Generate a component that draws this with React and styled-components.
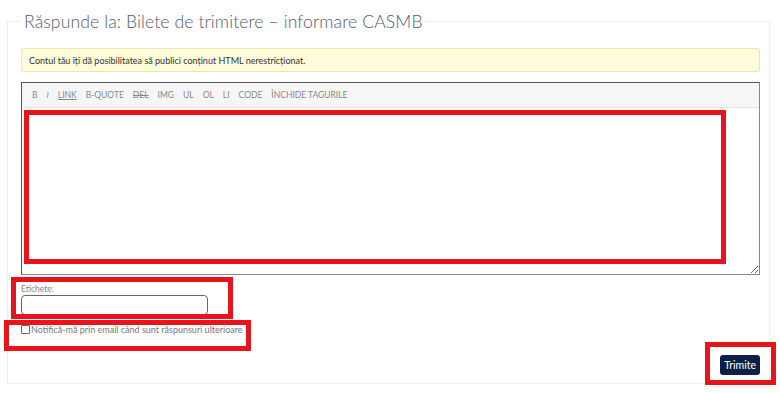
import React from 'react'
import styled, { createGlobalStyle } from 'styled-components'

const Global = createGlobalStyle`
  html, body { margin: 0; padding: 0; background: #fff; }
  body { font-family: Lato, "Open Sans", sans-serif; color: #555; }
  * { box-sizing: border-box; }
`

const Page = styled.div`
  position: relative;
  width: 780px;
  height: 393px;
  padding: 11px 10px 0 7px;
`

const Fieldset = styled.fieldset`
  margin: 0;
  height: 373px;
  border: 1px solid #eeeff1;
  padding: 16px 9px 0 13px;
`

const Legend = styled.legend`
  font-family: Lato, sans-serif;
  font-weight: 300;
  font-size: 17.6px;
  color: #4f5d6b;
  padding: 0 3px;
  margin-left: 0;
  letter-spacing: 0.1px;
`

const Notice = styled.div`
  height: 24px;
  background: #fffcdc;
  border: 1px solid #efe7a4;
  border-radius: 2px;
  font-size: 9px;
  color: #333;
  display: flex;
  align-items: center;
  padding-left: 7px;
`

const Editor = styled.div`
  margin-top: 10px;
  height: 193px;
  border: 1px solid #777;
  border-color: #555 #888 #888 #555;
  display: flex;
  flex-direction: column;
`

const Toolbar = styled.div`
  height: 25px;
  background: #f6f6f6;
  border-bottom: 1px solid #e2e2e2;
  display: flex;
  align-items: center;
  gap: 9px;
  padding-left: 10px;
  font-size: 8.5px;
  color: #888;
`

const Tool = styled.span`
  text-decoration: ${p => (p.$u ? 'underline' : p.$s ? 'line-through' : 'none')};
  font-style: ${p => (p.$i ? 'italic' : 'normal')};
`

const Area = styled.textarea`
  flex: 1;
  border: none;
  outline: none;
  resize: vertical;
  background: #fff;
`

const Label = styled.div`
  margin-top: 9px;
  font-size: 8.5px;
  color: #888;
  height: 10px;
  line-height: 10px;
`

const Input = styled.input`
  display: block;
  margin-top: 1px;
  width: 187px;
  height: 20px;
  border: 1px solid #666;
  border-radius: 4px;
  outline: none;
`

const CheckRow = styled.label`
  margin-top: 8px;
  display: flex;
  align-items: center;
  font-size: 9px;
  color: #777;
  height: 12px;
`

const Box = styled.span`
  width: 9px;
  height: 9px;
  border: 1px solid #666;
  border-radius: 1px;
  margin-right: 1px;
`

const Actions = styled.div`
  display: flex;
  justify-content: flex-end;
  margin-top: 20px;
`

const Submit = styled.button`
  height: 20px;
  padding: 0 4px;
  background: #0c1f47;
  color: #fff;
  border: none;
  border-radius: 3px;
  font-family: Lato, sans-serif;
  font-size: 10.5px;
`

const Mark = styled.div`
  position: absolute;
  border: 5px solid #e8141c;
  pointer-events: none;
`

const tools = [
  ['B'], ['I', { $i: true }], ['LINK', { $u: true }], ['B-QUOTE'], ['DEL', { $s: true }],
  ['IMG'], ['UL'], ['OL'], ['LI'], ['CODE'], ['ÎNCHIDE TAGURILE'],
]

export default function App() {
  return (
    <Page>
      <Global />
      <Fieldset>
        <Legend>Răspunde la: Bilete de trimitere – informare CASMB</Legend>
        <Notice>Contul tău îți dă posibilitatea să publici conținut HTML nerestricționat.</Notice>
        <Editor>
          <Toolbar>
            {tools.map(([t, p]) => (
              <Tool key={t} {...(p || {})}>{t}</Tool>
            ))}
          </Toolbar>
          <Area />
        </Editor>
        <Label>Etichete:</Label>
        <Input />
        <CheckRow>
          <Box />
          Notifică-mă prin email când sunt răspunsuri ulterioare
        </CheckRow>
        <Actions>
          <Submit>Trimite</Submit>
        </Actions>
      </Fieldset>
      <Mark style={{ left: 24, top: 110, width: 702, height: 154 }} />
      <Mark style={{ left: 11, top: 277, width: 222, height: 42 }} />
      <Mark style={{ left: 4, top: 320, width: 247, height: 31 }} />
      <Mark style={{ left: 705, top: 342, width: 71, height: 43 }} />
    </Page>
  )
}
